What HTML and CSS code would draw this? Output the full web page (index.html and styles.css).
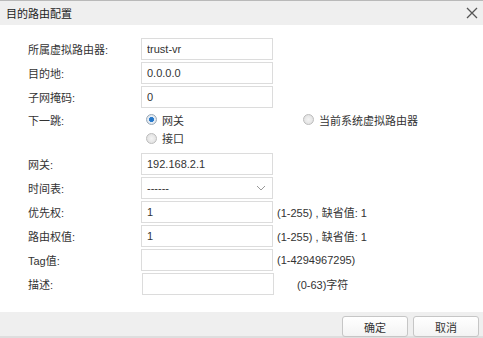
FILE: index.html
```html
<!DOCTYPE html>
<html lang="zh-CN">
<head>
    <meta charset="UTF-8">
    <title>目的路由配置</title>
    <link rel="stylesheet" href="styles.css">
</head>
<body>
    <div class="dialog">
        <div class="dialog-header">
            <span class="dialog-title">目的路由配置</span>
            <span class="close-btn">
                <svg width="12" height="12" viewBox="0 0 12 12"><path d="M1 1L11 11M11 1L1 11" stroke="#555" stroke-width="1.3"/></svg>
            </span>
        </div>
        <div class="dialog-body">
            <div class="form-row">
                <label>所属虚拟路由器:</label>
                <input type="text" class="field" value="trust-vr">
            </div>
            <div class="form-row">
                <label>目的地:</label>
                <input type="text" class="field" value="0.0.0.0">
            </div>
            <div class="form-row">
                <label>子网掩码:</label>
                <input type="text" class="field" value="0">
            </div>
            <div class="form-row radio-row">
                <label>下一跳:</label>
                <div class="radio-col">
                    <span class="radio checked"></span>网关
                </div>
                <div class="radio-col right">
                    <span class="radio"></span>当前系统虚拟路由器
                </div>
            </div>
            <div class="form-row radio-row second">
                <label></label>
                <div class="radio-col">
                    <span class="radio"></span>接口
                </div>
            </div>
            <div class="form-row">
                <label>网关:</label>
                <input type="text" class="field" value="192.168.2.1">
            </div>
            <div class="form-row">
                <label>时间表:</label>
                <div class="field select">
                    <span>------</span>
                    <svg width="10" height="6" viewBox="0 0 10 6"><path d="M1 1L5 5L9 1" fill="none" stroke="#999" stroke-width="1"/></svg>
                </div>
            </div>
            <div class="form-row">
                <label>优先权:</label>
                <input type="text" class="field" value="1">
                <span class="hint">(1-255) , 缺省值: 1</span>
            </div>
            <div class="form-row">
                <label>路由权值:</label>
                <input type="text" class="field" value="1">
                <span class="hint">(1-255) , 缺省值: 1</span>
            </div>
            <div class="form-row">
                <label>Tag值:</label>
                <input type="text" class="field" value="">
                <span class="hint">(1-4294967295)</span>
            </div>
            <div class="form-row desc-row">
                <label>描述:</label>
                <input type="text" class="field" value="">
                <span class="hint wide">(0-63)字符</span>
            </div>
        </div>
        <div class="dialog-footer">
            <button class="btn">确定</button>
            <button class="btn">取消</button>
        </div>
    </div>
</body>
</html>
```

FILE: styles.css
```css
body {
    margin: 0;
    padding: 0;
    font-family: "Liberation Sans", Arial, "Noto Sans CJK SC", sans-serif;
    font-size: 11px;
    color: #333;
    background: #fff;
}

.dialog {
    width: 483px;
    height: 338px;
    border-top: 1px solid #b9b9b9;
    box-sizing: border-box;
    display: flex;
    flex-direction: column;
}

.dialog-header {
    height: 24px;
    background-color: #efefef;
    display: flex;
    align-items: center;
    justify-content: space-between;
    padding: 0 5px 0 6px;
    font-size: 11px;
    color: #222;
}
.close-btn {
    display: flex;
    width: 12px;
    height: 12px;
}

.dialog-body {
    flex: 1;
    padding-top: 13px;
}

.form-row {
    display: flex;
    align-items: center;
    height: 22px;
    margin-bottom: 2px;
}
.form-row label {
    width: 113px;
    padding-left: 28px;
    flex-shrink: 0;
}

.field {
    width: 132px;
    height: 22px;
    box-sizing: border-box;
    border: 1px solid #dcdcdc;
    padding: 0 5px;
    font-family: inherit;
    font-size: 11px;
    color: #333;
    margin: 0;
    outline: none;
}
.select {
    display: flex;
    align-items: center;
    justify-content: space-between;
    padding: 0 6px 0 5px;
}

.hint {
    margin-left: 4px;
    color: #333;
}
.hint.wide {
    margin-left: 23px;
}

.radio-row {
    height: 19px;
    margin-bottom: 2px;
}
.radio-row.second {
    height: 14px;
    margin-bottom: 8px;
}
.radio-col {
    display: flex;
    align-items: center;
    padding-left: 5px;
    width: 157px;
}
.radio-col.right {
    width: auto;
    padding-left: 0;
}
.radio {
    width: 9px;
    height: 9px;
    border-radius: 50%;
    border: 1px solid #bcbcbc;
    background: radial-gradient(circle, #f4f4f4 0%, #dcdcdc 100%);
    margin-right: 5px;
}
.radio.checked {
    border-color: #9aa9b8;
    background: radial-gradient(circle, #1e6fc0 0%, #2f7fcf 38%, #e6eef6 45%, #d8dde2 100%);
}

.desc-row .field {
    margin-left: 1px;
}

.dialog-footer {
    height: 24px;
    background-color: #efefef;
    border-bottom: 2px solid #dedede;
    display: flex;
    justify-content: flex-end;
    align-items: flex-end;
    gap: 5px;
    padding-right: 4px;
}
.btn {
    width: 66px;
    height: 21px;
    background: linear-gradient(#ffffff, #f3f3f3);
    border: 1px solid #c6c6c6;
    border-radius: 3px;
    font-family: inherit;
    font-size: 11px;
    color: #333;
    margin-bottom: -1px;
    padding: 0;
}
```
